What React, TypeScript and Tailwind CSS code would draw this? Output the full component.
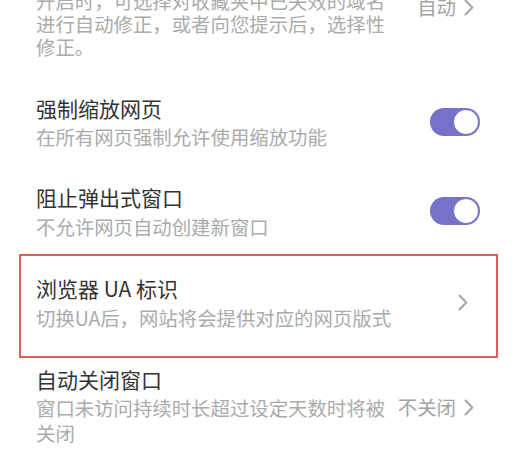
const FONT = { fontFamily: '"Noto Sans CJK SC", "Noto Sans", sans-serif' };

function Toggle() {
  return (
    <div className="flex h-[28px] w-[50px] items-center justify-end rounded-full bg-[#7672c9] pr-[1px]">
      <div className="h-[26px] w-[26px] rounded-full border-[1.5px] border-[#7672c9] bg-white" />
    </div>
  );
}

function Chevron() {
  return (
    <svg width="10" height="17" viewBox="0 0 10 17" fill="none">
      <path d="M1.5 1.5 L8.3 8.5 L1.5 15.5" stroke="#a6a6a6" strokeWidth="2" strokeLinecap="round" strokeLinejoin="round" />
    </svg>
  );
}

function Value({ text }: { text?: string }) {
  return (
    <div className="flex items-center gap-[8px] text-[19.4px] leading-[24px] text-[#a3a3a3]">
      {text && <span>{text}</span>}
      <Chevron />
    </div>
  );
}

export default function App() {
  return (
    <div className="h-[458px] w-[517px] overflow-hidden bg-white" style={FONT}>
      {/* cut-off row at top */}
      <div className="-mt-[11px] flex items-start justify-between pl-[36px] pr-[43px]">
        <p className="w-[352px] text-[19.4px] leading-[23px] text-[#ababab]">
          开启时，可选择对收藏夹中已失效的域名进行自动修正，或者向您提示后，选择性修正。
        </p>
        <div className="mt-[6px]">
          <Value text="自动" />
        </div>
      </div>

      <div className="mt-[36px] flex items-center justify-between pl-[36px] pr-[37px]">
        <div>
          <p className="text-[21px] leading-[28px] text-[#333]">强制缩放网页</p>
          <p className="mt-[3px] text-[19.4px] leading-[24px] text-[#ababab]">在所有网页强制允许使用缩放功能</p>
        </div>
        <Toggle />
      </div>

      <div className="mt-[34px] flex items-center justify-between pl-[36px] pr-[37px]">
        <div>
          <p className="text-[21px] leading-[28px] text-[#333]">阻止弹出式窗口</p>
          <p className="mt-[4px] text-[19.4px] leading-[24px] text-[#ababab]">不允许网页自动创建新窗口</p>
        </div>
        <Toggle />
      </div>

      <div className="mx-[19px] mt-[15px] flex items-center justify-between border-2 border-[#e25c58] pb-[26px] pl-[15px] pr-[28px] pt-[18px]">
        <div>
          <p className="text-[21px] leading-[28px] text-[#333]">浏览器 UA 标识</p>
          <p className="mt-[4px] text-[19.4px] leading-[24px] text-[#ababab]">切换UA后，网站将会提供对应的网页版式</p>
        </div>
        <Value />
      </div>

      <div className="mt-[7px] pl-[36px] pr-[43px]">
        <p className="text-[21px] leading-[28px] text-[#333]">自动关闭窗口</p>
        <div className="mt-[2px] flex items-start justify-between">
          <p className="w-[352px] text-[19.4px] leading-[25px] text-[#ababab]">窗口未访问持续时长超过设定天数时将被关闭</p>
          <Value text="不关闭" />
        </div>
      </div>
    </div>
  );
}
